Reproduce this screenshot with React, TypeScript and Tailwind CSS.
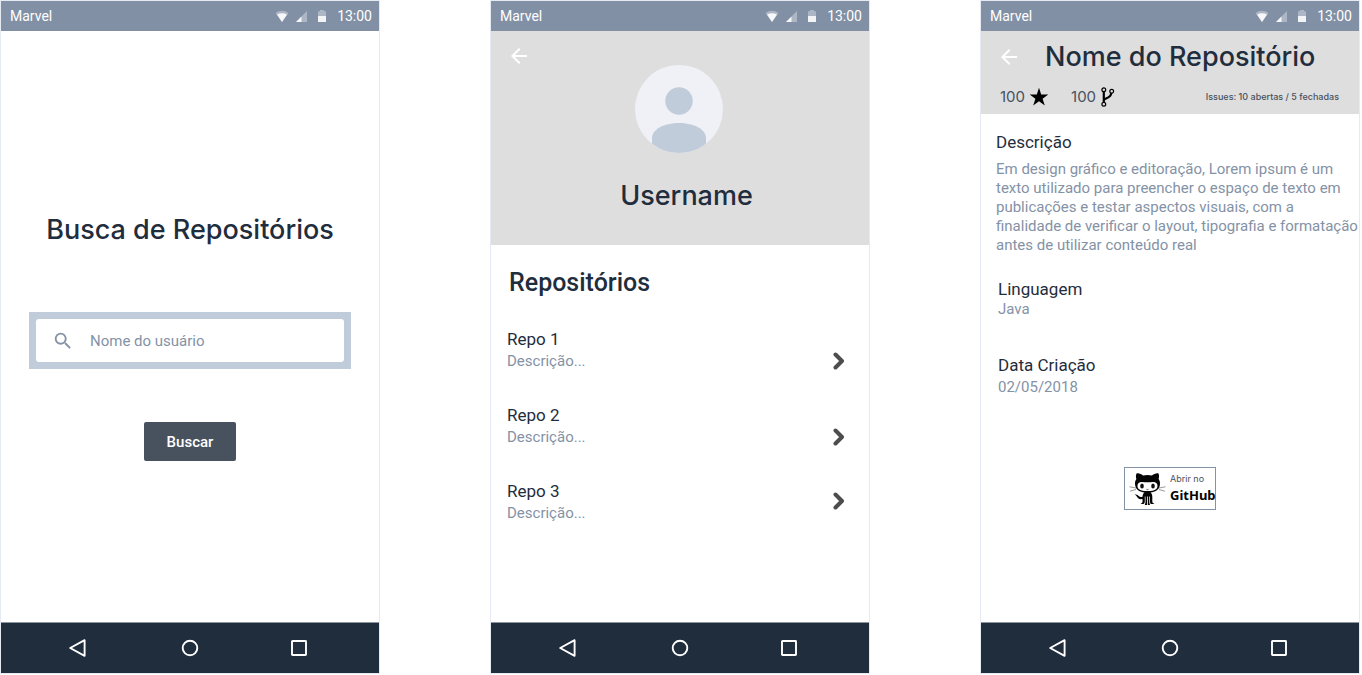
import React from "react";
import { MdArrowBack, MdSearch } from "react-icons/md";

const repos = [
  { name: "Repo 1", align: "items-end" },
  { name: "Repo 2", align: "items-end" },
  { name: "Repo 3", align: "items-center" },
];

function StatusBar() {
  return (
    <div className="flex h-[30px] items-center bg-[#8190a5] pr-[7px] pl-[9px] text-sm leading-5 text-white">
      <span className="flex-1">Marvel</span>
      <svg width="14" height="12" viewBox="0 0 14 12" aria-hidden="true">
        <path d="M0.5 3C4.5 0 9.5 0 13.5 3L7 12Z" fill="#fff" fillOpacity="0.35" />
        <path d="M2 4.6C5 2.8 9 2.8 12 4.6L7 12Z" fill="#fff" fillOpacity="0.9" />
      </svg>
      <svg className="ml-[7px]" width="11" height="11" viewBox="0 0 11 11" aria-hidden="true">
        <path d="M11 0V11H0Z" fill="#fff" fillOpacity="0.35" />
        <path d="M5.5 5.5V11H0Z" fill="#fff" fillOpacity="0.9" />
      </svg>
      <svg className="ml-[11px]" width="8" height="12" viewBox="0 0 8 12" aria-hidden="true">
        <path d="M0 1.2H2V0H6V1.2H8V6H0Z" fill="#fff" fillOpacity="0.35" />
        <path d="M0 6H8V12H0Z" fill="#fff" fillOpacity="0.9" />
      </svg>
      <span className="ml-[11px]">13:00</span>
    </div>
  );
}

function NavigationBar() {
  return (
    <nav className="flex h-[51px] items-center justify-between border-t border-[#8d959e] bg-[#1f2d3d] pr-[71px] pl-[67px]">
      <button type="button" aria-label="Voltar">
        <svg width="18" height="18" viewBox="0 0 18 18" fill="none" stroke="#fff" strokeWidth="1.9" strokeLinejoin="round">
          <path d="M16.6 1.2V16.8L2.2 9Z" />
        </svg>
      </button>
      <button type="button" aria-label="Início" className="ml-1">
        <svg width="18" height="18" viewBox="0 0 18 18" fill="none" stroke="#fff" strokeWidth="1.9">
          <circle cx="9" cy="9" r="7.3" />
        </svg>
      </button>
      <button type="button" aria-label="Recentes">
        <svg width="18" height="18" viewBox="0 0 18 18" fill="none" stroke="#fff" strokeWidth="1.9" strokeLinejoin="round">
          <rect x="2" y="2" width="14" height="14" rx="0.5" />
        </svg>
      </button>
    </nav>
  );
}

function Phone({ children }: { children: React.ReactNode }) {
  return (
    <section className="flex min-w-0 flex-col border border-[#e5e9f2] bg-white">
      <StatusBar />
      <div className="flex-1">{children}</div>
      <NavigationBar />
    </section>
  );
}

function BackButton() {
  return (
    <button type="button" aria-label="Voltar" className="text-2xl text-white">
      <MdArrowBack />
    </button>
  );
}

function Avatar() {
  return (
    <svg width="88" height="88" viewBox="0 0 88 88" role="img" aria-label="Foto do usuário">
      <defs>
        <clipPath id="avatar-circle">
          <circle cx="44" cy="44" r="44" />
        </clipPath>
      </defs>
      <g clipPath="url(#avatar-circle)">
        <rect width="88" height="88" fill="#eff1f7" />
        <circle cx="44" cy="36" r="13.7" fill="#c0ccda" />
        <path d="M17 88V73C17 64.500 29 58 44 58S71 64.500 71 73V88Z" fill="#c0ccda" />
      </g>
    </svg>
  );
}

function Octocat() {
  return (
    <svg className="shrink-0" width="37" height="34" viewBox="0 0 37 34" aria-hidden="true">
      <path
        d="M7.500 1.500C9.500 0.800 12 2 14 3.500C17 2.800 20 2.800 23 3.500C25 2 27.500 0.800 29.500 1.500C30.300 3.500 30.200 5.500 29.600 7C31 9 31.300 11 30.800 13.500C30 18 26 20 21.500 20.400C23 21.500 23.300 23 23.300 25V29.500C23.300 31 24.500 31.200 25.500 32H22C21 31.500 21 30.500 21 29V24.500H20.300V30C20.300 31.300 20.800 32 21 33H18.800V24.500H18V33H15.800C16 32 16.500 31.300 16.500 30V24.500H15.800V29C15.800 30.500 15.500 31.500 14.500 32H11.500C12.500 31.200 13.500 31 13.500 29.500V27C10.500 27.600 9 26.500 8 24.800C7.300 23.500 6.500 23.200 5.600 22.600C7.600 21.900 9 23.200 10 24.300C11 25.300 12.200 25.200 13.500 24.800C13.600 22.800 14.200 21.300 15.500 20.400C11 20 7 18 6.200 13.500C5.700 11 6 9 7.400 7C6.800 5.500 6.700 3.500 7.500 1.500Z"
        fill="#050505"
      />
      <path
        d="M10.500 10.400C13 9.400 15.500 10.300 18.500 10.300S24 9.400 26.500 10.400C29 11.500 29 15 27.300 17C25.500 18.800 22 19.100 18.500 19.100S11.500 18.800 9.700 17C8 15 8 11.500 10.500 10.400Z"
        fill="#fff"
      />
      <ellipse cx="13" cy="14" rx="1.800" ry="2.600" fill="#111" />
      <ellipse cx="24" cy="14" rx="1.800" ry="2.600" fill="#111" />
      <path d="M17.500 17.300Q18.500 18 19.500 17.300" fill="none" stroke="#111" strokeWidth="0.700" />
      <path d="M7 16L0.500 14.800M7 17.500L1 19.200M30 16L36.500 14.800M30 17.500L36 19.200" stroke="#555" strokeWidth="0.600" />
    </svg>
  );
}

function SearchScreen() {
  return (
    <Phone>
      <main className="flex flex-col items-center px-7 pt-[183px]">
        <h1 className="font-[Inter] text-[27px] leading-8 font-medium whitespace-nowrap text-[#1f2d3d]">
          Busca de Repositórios
        </h1>
        <form className="mt-[66px] flex w-full flex-col items-center" onSubmit={(e) => e.preventDefault()}>
          <div className="w-full bg-[#c0ccda] p-[7px]">
            <label className="flex h-[43px] items-center rounded-[3px] bg-white px-4 text-[#8492a6]">
              <MdSearch className="shrink-0 text-[22px]" aria-hidden="true" />
              <input
                type="text"
                aria-label="Nome do usuário"
                placeholder="Nome do usuário"
                className="ml-4 w-full min-w-0 bg-transparent pt-px text-[15px] leading-5 outline-none placeholder:text-[#8492a6]"
              />
            </label>
          </div>
          <button type="submit" className="mt-[53px] h-[39px] rounded-[2px] bg-[#47525e] px-[23px] text-[15px] leading-5 font-medium text-white">
            Buscar
          </button>
        </form>
      </main>
    </Phone>
  );
}

function UserScreen() {
  return (
    <Phone>
      <header className="grid h-[214px] grid-cols-[56px_1fr_58px] items-start bg-[#dedede]">
        <div className="pt-[13px] pl-4">
          <BackButton />
        </div>
        <div className="flex flex-col items-center pt-[34px]">
          <Avatar />
          <h1 className="mt-[27px] ml-[15px] font-[Inter] text-[27px] leading-8 font-medium text-[#1f2d3d]">Username</h1>
        </div>
      </header>
      <main className="pr-6 pl-4">
        <h2 className="pt-[22px] pl-[2px] text-[25px] leading-8 font-medium text-[#1f2d3d]">Repositórios</h2>
        <ul className="mt-7 flex flex-col gap-8">
          {repos.map((repo) => (
            <li key={repo.name}>
              <a href="#" className={`flex justify-between ${repo.align}`}>
                <span>
                  <span className="block text-[17px] leading-6 text-[#1f2d3d]">{repo.name}</span>
                  <span className="block text-[15px] leading-5 text-[#8492a6]">Descrição...</span>
                </span>
                <svg width="12" height="20" viewBox="0 0 12 20" fill="none" stroke="#4d4d4d" strokeWidth="4" strokeLinejoin="round" strokeLinecap="round" aria-hidden="true">
                  <path d="M2.500 3.500L9 10L2.500 16.500" />
                </svg>
              </a>
            </li>
          ))}
        </ul>
      </main>
    </Phone>
  );
}

function RepositoryScreen() {
  return (
    <Phone>
      <header className="h-[83px] bg-[#dedede] pt-[10px] font-[Inter] text-[#1f2d3d]">
        <div className="flex h-8 items-center gap-6 pl-4">
          <BackButton />
          <h1 className="text-[27px] leading-8 font-medium whitespace-nowrap">Nome do Repositório</h1>
        </div>
        <div className="mt-3 flex h-6 items-center pr-5 pl-[19px] text-[#47525e]">
          <span className="text-[15px] leading-5">100</span>
          <svg className="ml-1" width="20" height="20" viewBox="0 0 20 20" role="img" aria-label="Estrelas">
            <path d="M10 0.800L12.200 7.500H19.300L13.600 11.700L15.800 18.500L10 14.300L4.200 18.500L6.400 11.700L0.700 7.500H7.800Z" fill="#000" />
          </svg>
          <span className="ml-[22px] text-[15px] leading-5">100</span>
          <svg className="ml-1" width="16" height="20" viewBox="0 0 16 20" fill="none" stroke="#000" role="img" aria-label="Forks">
            <path d="M3.800 4.500V15.500M3.800 13.200C4.500 10.500 10.800 12 11.300 6" strokeWidth="2.200" />
            <circle cx="3.800" cy="2.800" r="1.900" fill="#dedede" strokeWidth="1.200" />
            <circle cx="3.800" cy="17.200" r="1.900" fill="#dedede" strokeWidth="1.200" />
            <circle cx="11.700" cy="4.200" r="1.900" fill="#dedede" strokeWidth="1.200" />
          </svg>
          <span className="ml-auto text-[9px] leading-3 font-medium whitespace-nowrap">Issues: 10 abertas / 5 fechadas</span>
        </div>
      </header>
      <main className="flex flex-col pl-[15px] text-[15px] text-[#8492a6]">
        <section className="pt-4">
          <h2 className="text-[17px] leading-6 text-[#1f2d3d]">Descrição</h2>
          <p className="mt-[6px] leading-[19px]">
            Em design gráfico e editoração, Lorem ipsum é um texto utilizado para preencher o espaço de texto em publicações e testar
            aspectos visuais, com a finalidade de verificar o layout, tipografia e formatação antes de utilizar conteúdo real
          </p>
        </section>
        <section className="mt-[22px] pl-[2px]">
          <h2 className="text-[17px] leading-6 text-[#1f2d3d]">Linguagem</h2>
          <p className="leading-4">Java</p>
        </section>
        <section className="mt-9 pl-[2px]">
          <h2 className="text-[17px] leading-6 text-[#1f2d3d]">Data Criação</h2>
          <p className="leading-5">02/05/2018</p>
        </section>
        <a href="https://github.com" className="mt-[70px] mr-[15px] flex h-[43px] w-[92px] items-center self-center border border-[#8492a6] pl-1">
          <Octocat />
          <span className="ml-1">
            <span className="block font-[Inter] text-[9px] leading-3 text-[#47525e]">Abrir no</span>
            <span className="block font-['Noto_Sans'] text-[13px] leading-5 font-bold text-black">GitHub</span>
          </span>
        </a>
      </main>
    </Phone>
  );
}

export default function App() {
  return (
    <div className="grid min-h-screen grid-cols-3 gap-[110px] bg-white pr-[2px] pb-px font-[Roboto,sans-serif]">
      <SearchScreen />
      <UserScreen />
      <RepositoryScreen />
    </div>
  );
}
